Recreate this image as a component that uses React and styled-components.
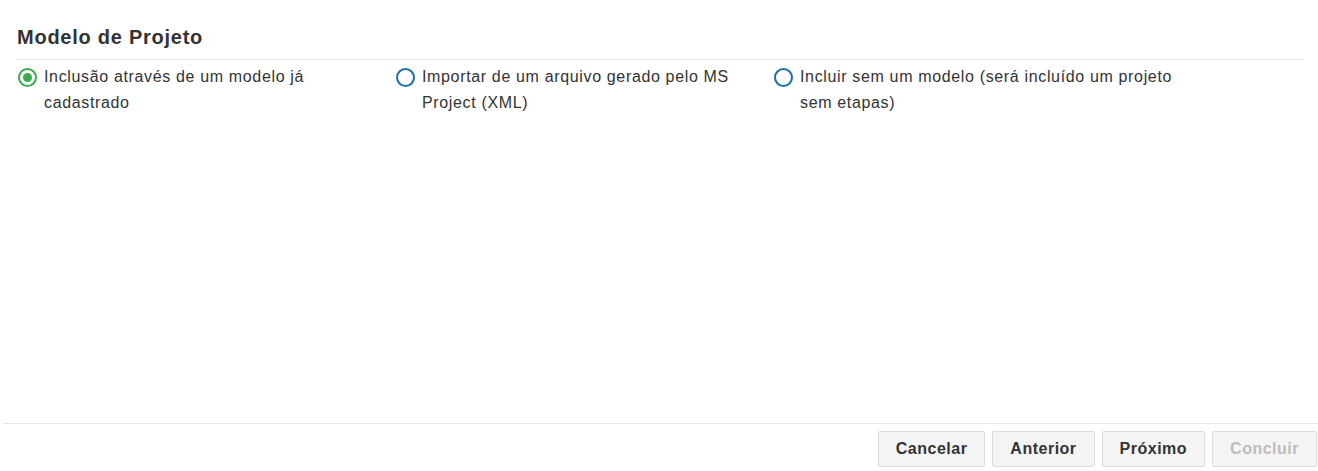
import React, { useState } from 'react';
import styled, { createGlobalStyle } from 'styled-components';

const GlobalStyle = createGlobalStyle`
  html, body {
    margin: 0;
    padding: 0;
    background: #fff;
    font-family: "Liberation Sans", Arial, sans-serif;
    color: #333;
  }
`;

const Page = styled.div`
  height: 100vh;
  display: flex;
  flex-direction: column;
  box-sizing: border-box;
`;

const Content = styled.div`
  flex: 1;
  padding: 25px 15px 0 17px;
`;

const Title = styled.h2`
  margin: 0;
  padding-bottom: 10px;
  font-size: 20px;
  line-height: 24px;
  font-weight: bold;
  letter-spacing: 0.75px;
  color: #333;
  border-bottom: 1px solid #e3e3e3;
`;

const Options = styled.div`
  display: grid;
  grid-template-columns: 378px 378px 430px;
  margin-top: 4px;
`;

const Option = styled.label`
  display: flex;
  align-items: flex-start;
  padding-right: 20px;
  font-size: 16px;
  line-height: 26px;
  letter-spacing: 0.65px;
  color: #333;
  cursor: pointer;
`;

const Radio = styled.span`
  flex: none;
  box-sizing: border-box;
  width: 19px;
  height: 19px;
  margin: 4px 7px 0 1px;
  border-radius: 50%;
  border: 2px solid ${p => (p.checked ? '#3ba94f' : '#1b6ea6')};
  display: flex;
  align-items: center;
  justify-content: center;

  &::after {
    content: '';
    width: 9px;
    height: 9px;
    border-radius: 50%;
    background: #3ba94f;
    display: ${p => (p.checked ? 'block' : 'none')};
  }
`;

const Footer = styled.div`
  border-top: 1px solid #e5e5e5;
  margin-left: 3px;
  padding: 7px 1px 4px 0;
  display: flex;
  justify-content: flex-end;
  gap: 7px;
`;

const Button = styled.button`
  height: 36px;
  padding: 0 17px;
  font-family: "Liberation Sans", Arial, sans-serif;
  font-size: 16px;
  font-weight: bold;
  letter-spacing: 0.5px;
  color: ${p => (p.disabled ? '#bdbdbd' : '#333')};
  background: #f4f4f4;
  border: 1px solid #dcdcdc;
  border-radius: 2px;
  cursor: ${p => (p.disabled ? 'default' : 'pointer')};
`;

const options = [
  { id: 'modelo', text: 'Inclusão através de um modelo já cadastrado' },
  { id: 'xml', text: 'Importar de um arquivo gerado pelo MS Project (XML)' },
  { id: 'vazio', text: 'Incluir sem um modelo (será incluído um projeto sem etapas)' },
];

export default function App() {
  const [selected, setSelected] = useState('modelo');

  return (
    <Page>
      <GlobalStyle />
      <Content>
        <Title>Modelo de Projeto</Title>
        <Options>
          {options.map(o => (
            <Option key={o.id} onClick={() => setSelected(o.id)}>
              <Radio checked={selected === o.id} />
              <span>{o.text}</span>
            </Option>
          ))}
        </Options>
      </Content>
      <Footer>
        <Button>Cancelar</Button>
        <Button>Anterior</Button>
        <Button>Próximo</Button>
        <Button disabled>Concluir</Button>
      </Footer>
    </Page>
  );
}
